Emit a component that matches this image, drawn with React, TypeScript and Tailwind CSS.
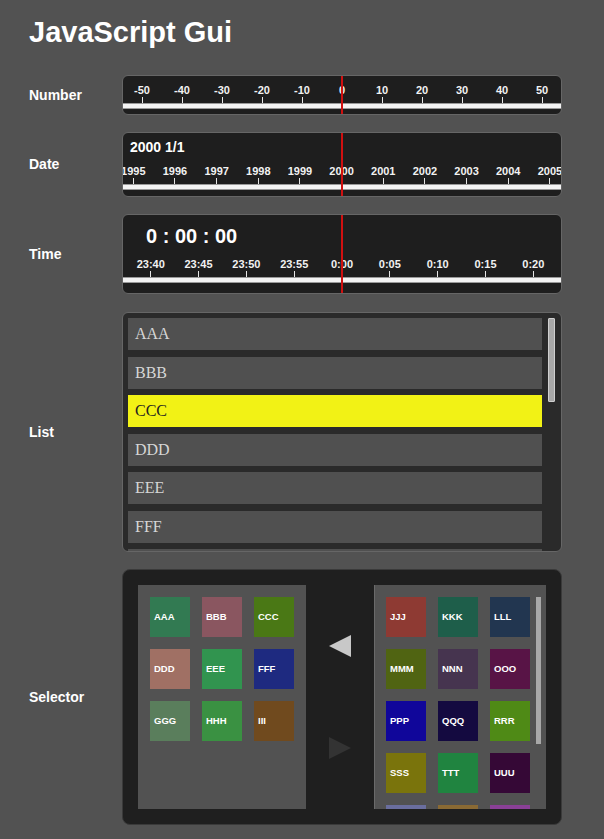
import React from "react";

const numberTicks = ["-50", "-40", "-30", "-20", "-10", "0", "10", "20", "30", "40", "50"];
const yearTicks = ["1995", "1996", "1997", "1998", "1999", "2000", "2001", "2002", "2003", "2004", "2005"];
const timeTicks = ["23:40", "23:45", "23:50", "23:55", "0:00", "0:05", "0:10", "0:15", "0:20"];

const listItems = ["AAA", "BBB", "CCC", "DDD", "EEE", "FFF", "GGG"];

const leftTiles = [
  { label: "AAA", color: "bg-[#327a52]" },
  { label: "BBB", color: "bg-[#8a5660]" },
  { label: "CCC", color: "bg-[#4a7815]" },
  { label: "DDD", color: "bg-[#a07064]" },
  { label: "EEE", color: "bg-[#31944f]" },
  { label: "FFF", color: "bg-[#1e2a80]" },
  { label: "GGG", color: "bg-[#5a7e5c]" },
  { label: "HHH", color: "bg-[#3a9142]" },
  { label: "III", color: "bg-[#704a1e]" },
];

const rightTiles = [
  { label: "JJJ", color: "bg-[#8e3a33]" },
  { label: "KKK", color: "bg-[#1e5e4a]" },
  { label: "LLL", color: "bg-[#223650]" },
  { label: "MMM", color: "bg-[#506412]" },
  { label: "NNN", color: "bg-[#46344f]" },
  { label: "OOO", color: "bg-[#581446]" },
  { label: "PPP", color: "bg-[#10069a]" },
  { label: "QQQ", color: "bg-[#140a40]" },
  { label: "RRR", color: "bg-[#4f8a16]" },
  { label: "SSS", color: "bg-[#7a740c]" },
  { label: "TTT", color: "bg-[#208440]" },
  { label: "UUU", color: "bg-[#350836]" },
  { label: "VVV", color: "bg-[#6a6e9e]" },
  { label: "WWW", color: "bg-[#8a6a34]" },
  { label: "XXX", color: "bg-[#8a4096]" },
];

function Row({ label, children, className = "" }: { label: string; children: React.ReactNode; className?: string }) {
  return (
    <div className={`flex items-center ${className}`}>
      <div className="w-[93px] shrink-0 text-[14px] font-bold text-white">{label}</div>
      {children}
    </div>
  );
}

function Scale({ ticks, cell, offset }: { ticks: string[]; cell: string; offset: string }) {
  return (
    <>
      <div className={`flex ${offset}`}>
        {ticks.map((t) => (
          <div key={t} className={`flex shrink-0 flex-col items-center ${cell}`}>
            <span className="h-[14px] whitespace-nowrap text-[11px] leading-[14px] font-bold text-[#f2f2f2]">{t}</span>
            <span className="h-[6px] w-px bg-[#e6e6e6]" />
          </div>
        ))}
      </div>
      <div className="h-[6px] border-y border-[#9a9a9a] bg-[#f4f4f4]" />
    </>
  );
}

function RulerPanel({ children, height }: { children: React.ReactNode; height: string }) {
  return (
    <div className={`relative w-[440px] overflow-hidden rounded-md border border-[#666] bg-[#1e1e1e] ${height}`}>
      {children}
      <div className="absolute top-0 bottom-0 left-[218px] w-[2px] bg-[#d01010]" />
    </div>
  );
}

function Tile({ label, color }: { label: string; color: string }) {
  return (
    <div className={`flex h-[40px] w-[40px] items-center pl-[4px] text-[9.5px] font-bold text-white ${color}`}>
      {label}
    </div>
  );
}

export default function App() {
  return (
    <div className="min-h-screen bg-[#525252] pt-[18px] pl-[29px] font-['Liberation_Sans',Arial,sans-serif]">
      <h1 className="text-[29px] leading-none font-bold text-white">JavaScript Gui</h1>

      <div className="mt-[28px] flex flex-col gap-[17px]">
        {/* Number */}
        <Row label="Number">
          <RulerPanel height="h-[40px]">
            <div className="pt-[7px]">
              <Scale ticks={numberTicks} cell="w-[40px]" offset="ml-[-1px]" />
            </div>
          </RulerPanel>
        </Row>

        {/* Date */}
        <Row label="Date">
          <RulerPanel height="h-[65px]">
            <div className="flex h-[28px] items-center pl-[7px] text-[14px] font-bold text-white">2000 1/1</div>
            <div className="pt-[3px]">
              <Scale ticks={yearTicks} cell="w-[41.67px]" offset="ml-[-10.5px]" />
            </div>
          </RulerPanel>
        </Row>

        {/* Time */}
        <Row label="Time">
          <RulerPanel height="h-[80px]">
            <div className="flex h-[42px] items-center pl-[23px] text-[20px] font-bold text-white">
              0 : 00 : 00
            </div>
            <Scale ticks={timeTicks} cell="w-[47.83px]" offset="ml-[3.8px]" />
          </RulerPanel>
        </Row>

        {/* List */}
        <Row label="List" className="mt-px">
          <div className="flex h-[240px] w-[440px] gap-[6px] overflow-hidden rounded-md border border-[#666] bg-[#2a2a2a] pt-[5px] pr-[6px] pl-[5px]">
            <div className="flex flex-1 flex-col gap-[6.5px] overflow-hidden">
              {listItems.map((item) => (
                <div
                  key={item}
                  className={`flex h-[32px] shrink-0 items-center pl-[7px] font-['Liberation_Serif','Times_New_Roman',serif] text-[16px] ${
                    item === "CCC" ? "bg-[#f2f215] text-[#222]" : "bg-[#505050] text-[#d6d6d6]"
                  }`}
                >
                  {item}
                </div>
              ))}
            </div>
            <div className="h-[84px] w-[7px] rounded-[1px] border border-[#cfcfcf] bg-[#a8a8a8]" />
          </div>
        </Row>

        {/* Selector */}
        <Row label="Selector">
          <div className="flex h-[256px] w-[440px] rounded-lg border border-[#3a3a3a] bg-[#1f1f1f] p-[15px]">
            <div className="w-[168px] shrink-0 bg-[#525252] p-[12px]">
              <div className="grid grid-cols-[40px_40px_40px] gap-[12px]">
                {leftTiles.map((t) => (
                  <Tile key={t.label} {...t} />
                ))}
              </div>
            </div>

            <div className="flex w-[68px] shrink-0 flex-col items-center justify-center gap-[80px]">
              <svg width="22" height="22" viewBox="0 0 22 22">
                <polygon points="0,11 22,0 22,22" fill="#c8c8c8" />
              </svg>
              <svg width="22" height="22" viewBox="0 0 22 22">
                <polygon points="0,0 22,11 0,22" fill="#333333" />
              </svg>
            </div>

            <div className="flex flex-1 overflow-hidden border-l border-[#6a6a6a] bg-[#525252] pt-[12px] pl-[11px]">
              <div className="grid h-fit grid-cols-[40px_40px_40px] gap-[12px]">
                {rightTiles.map((t) => (
                  <Tile key={t.label} {...t} />
                ))}
              </div>
              <div className="ml-[6px] h-[147px] w-[5px] shrink-0 bg-[#a8a8a8]" />
            </div>
          </div>
        </Row>
      </div>
    </div>
  );
}
